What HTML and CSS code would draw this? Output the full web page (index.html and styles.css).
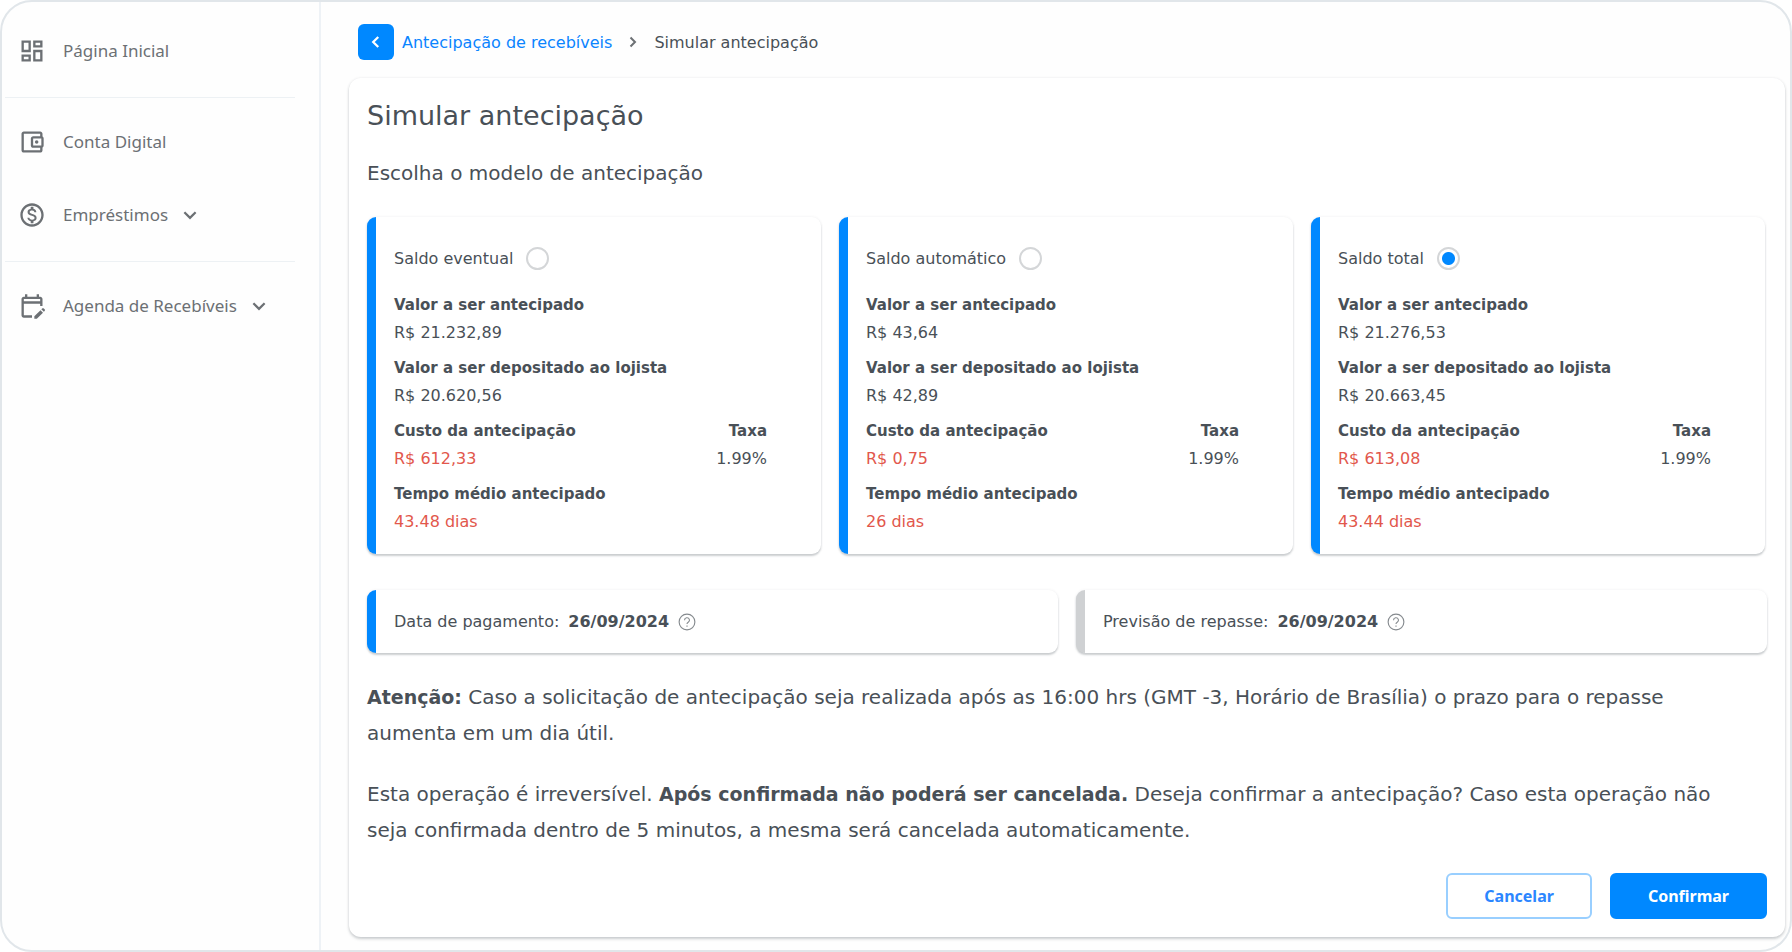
FILE: index.html
```html
<!DOCTYPE html>
<html lang="pt-BR">
<head>
  <meta charset="UTF-8" />
  <meta name="viewport" content="width=device-width, initial-scale=1.0"/>
  <title>Simular antecipação</title>
  <link rel="stylesheet" href="styles.css">
</head>
<body>

  <div class="app">

    <nav class="sidebar">
      <ul class="menu">
        <li class="menu-group">
          <a href="#" class="menu-item">
            <svg class="menu-icon" viewBox="0 0 24 24"><path d="M19 5v2h-4V5h4M9 5v6H5V5h4m10 8v6h-4v-6h4M9 17v2H5v-2h4M21 3h-8v6h8V3zM11 3H3v10h8V3zm10 8h-8v10h8V11zm-10 4H3v6h8v-6z"/></svg>
            <span>Página Inicial</span>
          </a>
        </li>
        <li class="menu-group">
          <a href="#" class="menu-item">
            <svg class="menu-icon" viewBox="0 0 24 24"><path d="M21 7.280V5c0-1.100-.9-2-2-2H5c-1.110 0-2 .9-2 2v14c0 1.100.89 2 2 2h14c1.100 0 2-.9 2-2v-2.280c.59-.35 1-.98 1-1.720V9c0-.74-.41-1.370-1-1.720zM20 9v6h-7V9h7zM5 19V5h14v2h-6c-1.100 0-2 .9-2 2v6c0 1.100.9 2 2 2h6v2H5z"/><circle cx="16" cy="12" r="1.500"/></svg>
            <span>Conta Digital</span>
          </a>
          <a href="#" class="menu-item">
            <svg class="menu-icon" viewBox="0 0 24 24"><path d="M12 2C6.480 2 2 6.480 2 12s4.480 10 10 10 10-4.480 10-10S17.520 2 12 2zm0 18c-4.410 0-8-3.590-8-8s3.590-8 8-8 8 3.590 8 8-3.590 8-8 8zm.31-8.860c-1.770-.45-2.340-.94-2.340-1.670 0-.84.79-1.430 2.100-1.430 1.380 0 1.900.66 1.940 1.640h1.710c-.05-1.340-.87-2.570-2.490-2.970V5H10.900v1.690c-1.510.32-2.720 1.300-2.720 2.810 0 1.790 1.490 2.690 3.660 3.210 1.950.46 2.340 1.150 2.340 1.870 0 .53-.39 1.390-2.100 1.390-1.600 0-2.230-.72-2.320-1.640H8.040c.1 1.700 1.360 2.660 2.860 2.970V19h2.340v-1.670c1.520-.29 2.720-1.160 2.730-2.770-.01-2.200-1.900-2.960-3.660-3.420z"/></svg>
            <span>Empréstimos</span>
            <svg class="chevron" viewBox="0 0 16 16"><path d="M3 5.500l5 5 5-5"/></svg>
          </a>
        </li>
        <li class="menu-group">
          <a href="#" class="menu-item">
            <svg class="menu-icon" viewBox="0 0 24 24"><path d="M5 10h14v2h2V6c0-1.100-.9-2-2-2h-1V2h-2v2H8V2H6v2H5c-1.110 0-1.990.9-1.990 2L3 20c0 1.100.89 2 2 2h7v-2H5V10zm0-4h14v2H5V6zm17.840 10.280l-.71.71-2.120-2.120.71-.71c.39-.39 1.020-.39 1.410 0l.71.71c.39.39.39 1.020 0 1.410zm-3.540-.7l2.120 2.120-5.300 5.300H14v-2.120l5.300-5.300z"/></svg>
            <span>Agenda de Recebíveis</span>
            <svg class="chevron" viewBox="0 0 16 16"><path d="M3 5.500l5 5 5-5"/></svg>
          </a>
        </li>
      </ul>
    </nav>

    <main class="main">
      <div class="breadcrumb">
        <button type="button" class="back" aria-label="Voltar">
          <svg viewBox="0 0 16 16"><path d="M10 3.500L5.500 8l4.500 4.500"/></svg>
        </button>
        <a href="#">Antecipação de recebíveis</a>
        <svg class="separator" viewBox="0 0 16 16"><path d="M5.500 3.500L10 8l-4.500 4.500"/></svg>
        <span>Simular antecipação</span>
      </div>

      <form class="panel">
        <h1>Simular antecipação</h1>
        <h2>Escolha o modelo de antecipação</h2>

        <div class="options">
          <section class="card">
            <label class="option">Saldo eventual <input type="radio" name="modelo"></label>
            <dl>
              <div><dt>Valor a ser antecipado</dt><dd>R$ 21.232,89</dd></div>
              <div><dt>Valor a ser depositado ao lojista</dt><dd>R$ 20.620,56</dd></div>
              <div class="split">
                <div><dt>Custo da antecipação</dt><dd class="cost">R$ 612,33</dd></div>
                <div class="rate"><dt>Taxa</dt><dd>1.99%</dd></div>
              </div>
              <div><dt>Tempo médio antecipado</dt><dd class="cost">43.48 dias</dd></div>
            </dl>
          </section>

          <section class="card">
            <label class="option">Saldo automático <input type="radio" name="modelo"></label>
            <dl>
              <div><dt>Valor a ser antecipado</dt><dd>R$ 43,64</dd></div>
              <div><dt>Valor a ser depositado ao lojista</dt><dd>R$ 42,89</dd></div>
              <div class="split">
                <div><dt>Custo da antecipação</dt><dd class="cost">R$ 0,75</dd></div>
                <div class="rate"><dt>Taxa</dt><dd>1.99%</dd></div>
              </div>
              <div><dt>Tempo médio antecipado</dt><dd class="cost">26 dias</dd></div>
            </dl>
          </section>

          <section class="card">
            <label class="option">Saldo total <input type="radio" name="modelo" checked></label>
            <dl>
              <div><dt>Valor a ser antecipado</dt><dd>R$ 21.276,53</dd></div>
              <div><dt>Valor a ser depositado ao lojista</dt><dd>R$ 20.663,45</dd></div>
              <div class="split">
                <div><dt>Custo da antecipação</dt><dd class="cost">R$ 613,08</dd></div>
                <div class="rate"><dt>Taxa</dt><dd>1.99%</dd></div>
              </div>
              <div><dt>Tempo médio antecipado</dt><dd class="cost">43.44 dias</dd></div>
            </dl>
          </section>
        </div>

        <div class="dates">
          <div class="card date">
            <span>Data de pagamento:</span>
            <strong>26/09/2024</strong>
            <svg class="help" viewBox="0 0 16 16"><circle cx="8" cy="8" r="7"/><path d="M5.800 6.400a2.200 2.200 0 1 1 3.300 1.900c-.7.4-1.100.8-1.100 1.500M8 11v1.200"/></svg>
          </div>
          <div class="card date muted">
            <span>Previsão de repasse:</span>
            <strong>26/09/2024</strong>
            <svg class="help" viewBox="0 0 16 16"><circle cx="8" cy="8" r="7"/><path d="M5.800 6.400a2.200 2.200 0 1 1 3.300 1.900c-.7.4-1.100.8-1.100 1.500M8 11v1.200"/></svg>
          </div>
        </div>

        <p><strong>Atenção:</strong> Caso a solicitação de antecipação seja realizada após as 16:00 hrs (GMT -3, Horário de Brasília) o prazo para o repasse aumenta em um dia útil.</p>
        <p>Esta operação é irreversível. <strong>Após confirmada não poderá ser cancelada.</strong> Deseja confirmar a antecipação? Caso esta operação não seja confirmada dentro de 5 minutos, a mesma será cancelada automaticamente.</p>

        <div class="actions">
          <button type="button" class="btn btn-outline">Cancelar</button>
          <button type="submit" class="btn btn-primary">Confirmar</button>
        </div>
      </form>
    </main>

  </div>

</body>
</html>
```

FILE: styles.css
```css
* {
  box-sizing: border-box;
}

body {
  margin: 0;
  font-family: "DejaVu Sans", sans-serif;
  font-size: 16px;
  color: #495057;
  background: #fff;
}

.app {
  display: flex;
  min-height: 100vh;
  border: 2px solid #e1e6ea;
  border-radius: 32px;
  background: #fefefe;
  overflow: hidden;
}

/* Sidebar */
.sidebar {
  flex: 0 0 319px;
  padding: 12px 24px 0 3px;
  border-right: 2px solid #eef2f6;
  font-family: "Noto Sans", sans-serif;
  font-size: 17px;
}

.menu {
  list-style: none;
  margin: 0;
  padding: 0;
}

.menu-group {
  padding-bottom: 10px;
}

.menu-group + .menu-group {
  border-top: 1px solid #edf1f4;
  padding-top: 7px;
}

.menu-item {
  display: flex;
  align-items: center;
  height: 73px;
  padding-left: 13px;
  color: #6c7074;
  text-decoration: none;
}

.menu-icon {
  width: 28px;
  height: 28px;
  margin-right: 17px;
  fill: #6c7074;
}

.chevron {
  width: 18px;
  height: 18px;
  margin-left: 13px;
  fill: none;
  stroke: #6c7074;
  stroke-width: 2;
}

/* Main */
.main {
  flex: 1;
  min-width: 0;
  padding: 22px 5px 13px 28px;
}

.breadcrumb {
  display: flex;
  align-items: center;
  height: 36px;
  margin: 0 0 18px 9px;
}

.breadcrumb a {
  color: #0a84ff;
  text-decoration: none;
}

.back {
  display: flex;
  align-items: center;
  justify-content: center;
  width: 36px;
  height: 36px;
  margin: 0 8px 0 0;
  padding: 0;
  border: none;
  border-radius: 6px;
  background: #0088ff;
  cursor: pointer;
}

.back svg {
  width: 18px;
  height: 18px;
  fill: none;
  stroke: #fff;
  stroke-width: 2;
}

.separator {
  width: 16px;
  height: 16px;
  margin: 0 13px;
  fill: none;
  stroke: #6c7074;
  stroke-width: 2;
}

.panel {
  padding: 18px;
  border-radius: 12px;
  background: #fff;
  box-shadow: 0 2px 3px rgba(60, 70, 80, 0.25), 0 0 3px rgba(60, 70, 80, 0.08);
}

.panel h1 {
  margin: 0 0 20px;
  font-size: 27px;
  font-weight: 400;
  line-height: 40px;
}

.panel h2 {
  margin: 0 0 27px;
  font-size: 20px;
  font-weight: 400;
  line-height: 34px;
}

.options {
  display: grid;
  grid-template-columns: repeat(3, 1fr);
  gap: 18px;
  margin: 0 2px 36px 0;
}

.card {
  border-left: 9px solid #0088ff;
  border-radius: 9px;
  background: #fff;
  box-shadow: 0 2px 2px rgba(60, 70, 80, 0.25), 0 0 3px rgba(60, 70, 80, 0.08);
}

.options .card {
  padding: 27px 54px 19px 18px;
}

.option {
  display: flex;
  align-items: center;
  height: 28px;
  margin-bottom: 20px;
}

.option input {
  appearance: none;
  width: 23px;
  height: 23px;
  margin: 0 0 0 13px;
  border: 2px solid #d4d6d8;
  border-radius: 50%;
}

.option input:checked {
  background: radial-gradient(circle, #0088ff 6px, transparent 7px);
}

dl,
dd {
  margin: 0;
}

dl {
  display: grid;
  gap: 9px;
}

dt,
dd {
  line-height: 27px;
}

dt {
  font-size: 15px;
  font-weight: 700;
}

.split {
  display: flex;
  justify-content: space-between;
}

.rate {
  text-align: right;
}

.cost {
  color: #e2574c;
}

.dates {
  display: grid;
  grid-template-columns: repeat(2, 1fr);
  gap: 18px;
  margin-bottom: 26px;
}

.date {
  display: flex;
  align-items: center;
  gap: 9px;
  height: 63px;
  padding: 0 18px;
}

.muted {
  border-left-color: #cfd1d3;
}

.help {
  width: 18px;
  height: 18px;
  fill: none;
  stroke: #858a8e;
}

.panel p {
  margin: 0 0 25px;
  padding-right: 28px;
  font-size: 20px;
  line-height: 36px;
}

.panel p strong {
  font-size: 19px;
}

.actions {
  display: flex;
  justify-content: flex-end;
  gap: 18px;
}

.btn {
  height: 46px;
  padding: 0 36px;
  border: 2px solid #0088ff;
  border-radius: 6px;
  font-family: "Noto Sans", sans-serif;
  font-size: 16px;
  font-weight: 700;
  cursor: pointer;
}

.btn-outline {
  border-color: #99cfff;
  background: #fff;
  color: #2b86ff;
}

.btn-primary {
  background: #0088ff;
  color: #fff;
}
```
